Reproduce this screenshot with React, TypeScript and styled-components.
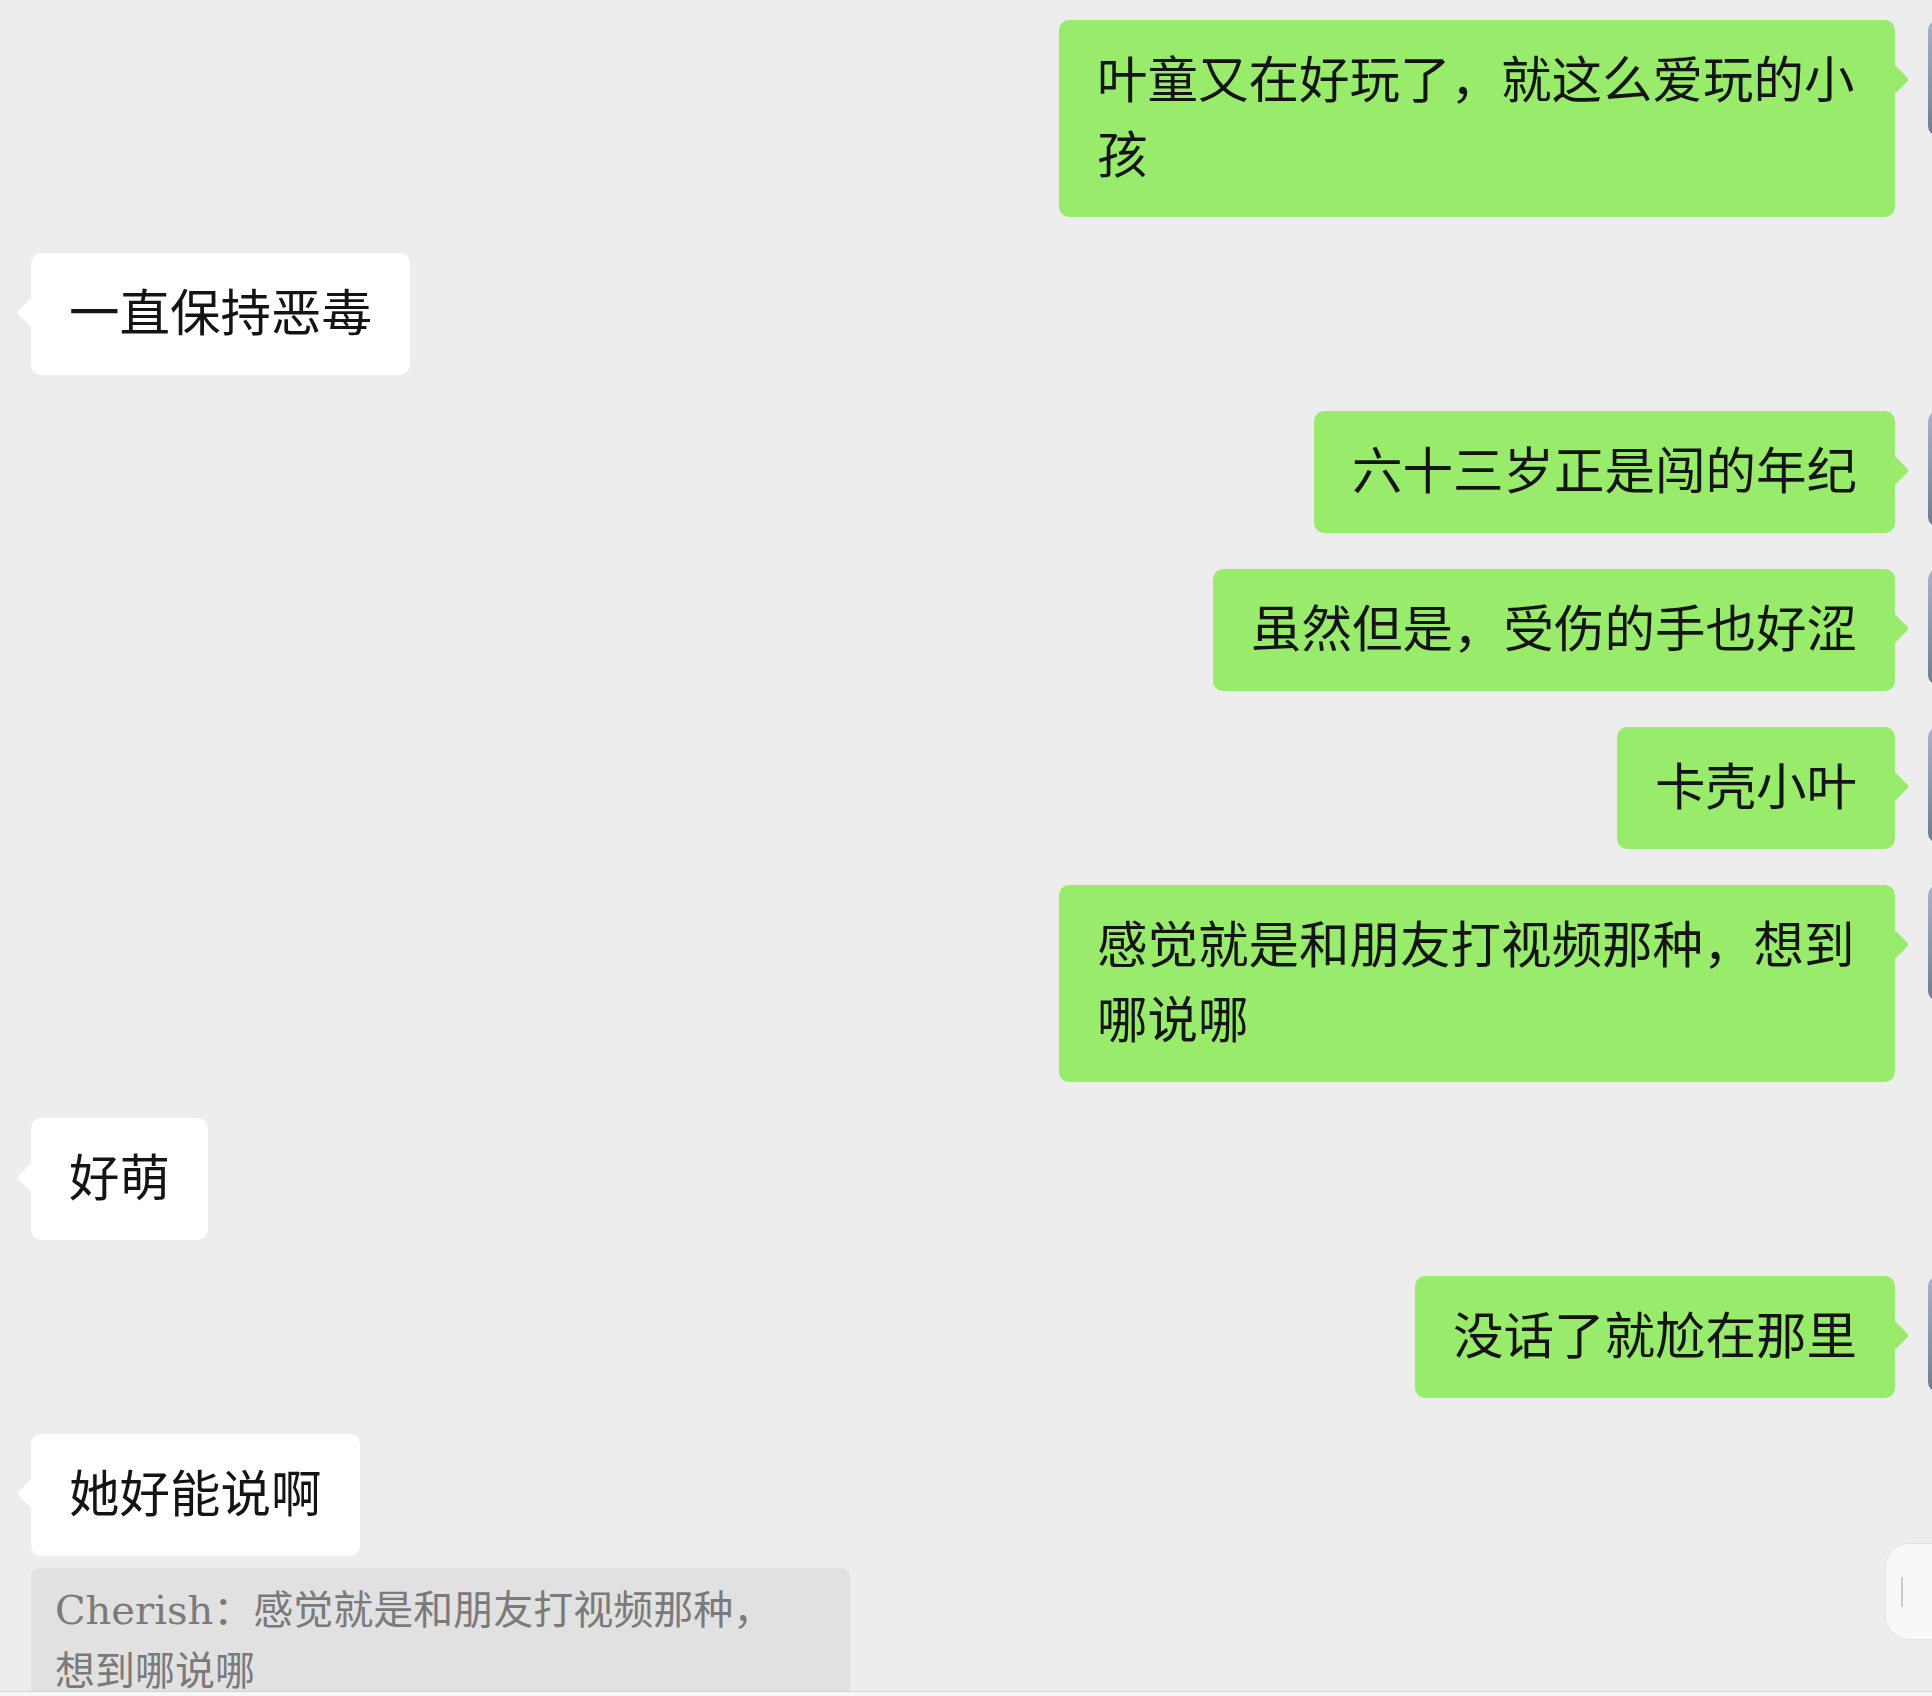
import styled, { createGlobalStyle } from 'styled-components';

const GlobalStyle = createGlobalStyle`
  * {
    margin: 0;
    padding: 0;
    box-sizing: border-box;
  }

  html, body {
    width: 100%;
    height: 100%;
    overflow: hidden;
    background: #ededed;
  }

  body {
    font-family: "Liberation Serif", "Noto Sans CJK SC", serif;
    color: #141414;
  }
`;

const Screen = styled.div`
  display: flex;
  flex-direction: column;
  width: 1932px;
  height: 1696px;
  overflow: hidden;
`;

const ChatArea = styled.div`
  position: relative;
  flex: 1;
  overflow: hidden;
  display: flex;
  flex-direction: column;
  gap: 36px;
  padding-top: 20px;
`;

const Row = styled.div<{ $mine?: boolean }>`
  display: flex;
  align-items: flex-start;
  justify-content: ${p => (p.$mine ? 'flex-end' : 'flex-start')};
  padding-left: ${p => (p.$mine ? '0' : '31px')};
`;

const Group = styled.div`
  display: flex;
  flex-direction: column;
  align-items: flex-start;
  gap: 12px;
`;

const Bubble = styled.div<{ $mine?: boolean }>`
  position: relative;
  max-width: 836px;
  padding: 23.5px 38px;
  border-radius: 10px;
  background: ${p => (p.$mine ? '#98eb6b' : '#ffffff')};
  color: #141414;
  font-size: 50.5px;
  line-height: 75px;
  word-break: break-all;

  &::after {
    content: '';
    position: absolute;
    top: 49px;
    width: 21px;
    height: 21px;
    border-radius: 3px;
    background: inherit;
    transform: rotate(45deg);
    ${p => (p.$mine ? 'right: -10px;' : 'left: -10px;')}
  }
`;

const Avatar = styled.div`
  flex: none;
  width: 116px;
  height: 116px;
  margin-left: 33px;
  margin-right: -112px;
  border-radius: 10px;
  background: linear-gradient(180deg, #a6b3cb 0%, #8896aa 55%, #6c7b8d 100%);
`;

const Quote = styled.div`
  width: 819px;
  padding: 12px 60px 0 24px;
  border-radius: 8px;
  background: #e1e1e1;
  color: #7a7a7a;
  font-family: "DejaVu Serif", "Noto Sans CJK SC", serif;
  font-size: 40px;
  line-height: 61px;
`;

const ScrollButton = styled.div`
  position: absolute;
  left: 1885px;
  top: 1543px;
  width: 90px;
  height: 97px;
  border-radius: 24px;
  background: #f7f8fa;
  border: 1px solid #e2e3e6;
  display: flex;
  align-items: center;
  padding-left: 15px;
`;

const ScrollGrip = styled.div`
  width: 2px;
  height: 30px;
  border-radius: 1px;
  background: #c9c9ce;
`;

const BottomBar = styled.div`
  flex: none;
  height: 5px;
  border-top: 1px solid #d4d4d4;
  background: #f7f7f7;
`;

type Msg = { mine: boolean; text: string };

const messages: Msg[] = [
  { mine: true, text: '叶童又在好玩了，就这么爱玩的小孩' },
  { mine: false, text: '一直保持恶毒' },
  { mine: true, text: '六十三岁正是闯的年纪' },
  { mine: true, text: '虽然但是，受伤的手也好涩' },
  { mine: true, text: '卡壳小叶' },
  { mine: true, text: '感觉就是和朋友打视频那种，想到哪说哪' },
  { mine: false, text: '好萌' },
  { mine: true, text: '没话了就尬在那里' },
];

export default function App() {
  return (
    <>
      <GlobalStyle />
      <Screen>
        <ChatArea>
          {messages.map((m, i) => (
            <Row key={i} $mine={m.mine}>
              <Bubble $mine={m.mine}>{m.text}</Bubble>
              {m.mine && <Avatar />}
            </Row>
          ))}
          <Row>
            <Group>
              <Bubble>她好能说啊</Bubble>
              <Quote>Cherish：感觉就是和朋友打视频那种，想到哪说哪</Quote>
            </Group>
          </Row>
          <ScrollButton>
            <ScrollGrip />
          </ScrollButton>
        </ChatArea>
        <BottomBar />
      </Screen>
    </>
  );
}
